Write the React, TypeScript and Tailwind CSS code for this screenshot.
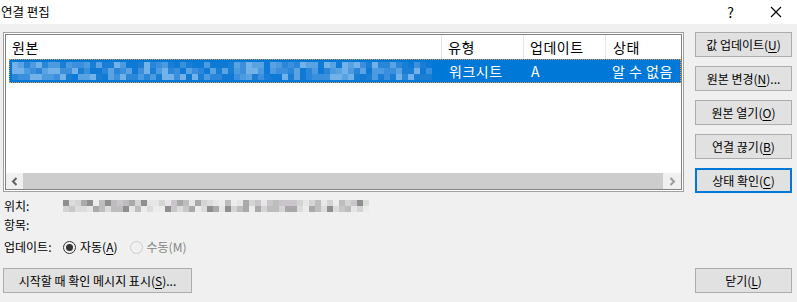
import React from "react";

const FONT = "font-['Noto_Sans_CJK_KR','Noto_Sans',sans-serif]";

function mosaic(seed: number, cols: number, rows: number, palette: string[]) {
  let s = seed;
  const next = () => {
    s = (s * 1103515245 + 12345) % 2147483648;
    return s / 2147483648;
  };
  const grid: string[][] = [];
  for (let r = 0; r < rows; r++) {
    const row: string[] = [];
    for (let c = 0; c < cols; c++) {
      row.push(palette[Math.floor(next() * palette.length)]);
    }
    grid.push(row);
  }
  return grid;
}

const ROW_BLUR = mosaic(7, 70, 3, ["#1a7fd4", "#3b8fdc", "#5aa3e3", "#2a86d8", "#72b2e8", "#0f79d6", "#4c9ae0"]);
const PATH_BLUR = mosaic(31, 51, 2, ["#e6e6e6", "#d4d4d4", "#bdbdbd", "#a9a9a9", "#ececec", "#c9c5ca", "#dcdcdc", "#8f8f8f"]);

function Blur({ grid, cell }: { grid: string[][]; cell: number }) {
  return (
    <div className="flex flex-col">
      {grid.map((row, i) => (
        <div key={i} className="flex">
          {row.map((c, j) => (
            <span key={j} style={{ width: cell, height: cell, background: c }} />
          ))}
        </div>
      ))}
    </div>
  );
}

function Btn({ children, focused, className = "" }: { children: React.ReactNode; focused?: boolean; className?: string }) {
  return (
    <button
      className={`flex h-[25px] w-[97px] items-center justify-center bg-[#e1e1e1] text-[12px] leading-none text-black ${
        focused ? "border-2 border-[#0078d7]" : "border border-[#adadad]"
      } ${className}`}
    >
      {children}
    </button>
  );
}

function U({ children }: { children: React.ReactNode }) {
  return <span className="underline underline-offset-2">{children}</span>;
}

export default function App() {
  return (
    <div className={`flex h-[302px] w-[797px] flex-col bg-[#f0f0f0] text-black ${FONT}`}>
      {/* title bar */}
      <div className="flex h-[24px] items-center bg-white">
        <span className="pl-[1px] text-[12.5px] leading-none">연결 편집</span>
        <span className="ml-auto mr-[36px] text-[14px] leading-none">?</span>
        <svg width="12" height="12" viewBox="0 0 12 12" className="mr-[15px]">
          <path d="M1 1 L11 11 M11 1 L1 11" stroke="#000" strokeWidth="1.1" />
        </svg>
      </div>

      <div className="flex pt-[8px]">
        {/* left column */}
        <div className="ml-[3px] flex w-[681px] flex-col">
          <div className="h-[160px] border border-[#a0a0a0] bg-white p-[1px]">
            <div className="flex h-full flex-col overflow-hidden border border-[#828282] bg-white">
              {/* header */}
              <div className="flex h-[24px] items-center text-[14px] leading-none tracking-[0.5px]">
                <div className="flex h-full w-[436px] items-center border-r border-[#e5e5e5] pl-[6px]">원본</div>
                <div className="flex h-full w-[82px] items-center border-r border-[#e5e5e5] pl-[6px]">유형</div>
                <div className="flex h-full w-[82px] items-center border-r border-[#e5e5e5] pl-[6px]">업데이트</div>
                <div className="flex h-full flex-1 items-center pl-[7px]">상태</div>
              </div>
              {/* selected row */}
              <div className="ml-[3px] flex h-[24px] items-center border border-dotted border-[#e39a4a] bg-[#0078d7] text-[14px] leading-none tracking-[0.5px] text-white">
                <div className="flex w-[432px] items-center overflow-hidden pl-[2px]">
                  <Blur grid={ROW_BLUR} cell={6} />
                </div>
                <div className="w-[82px] pl-[7px]">워크시트</div>
                <div className="w-[82px] pl-[7px]">A</div>
                <div className="flex-1 whitespace-nowrap pl-[6px]">알 수 없음</div>
              </div>
              <div className="flex-1" />
              {/* horizontal scrollbar */}
              <div className="flex h-[16px] items-stretch">
                <div className="flex w-[17px] items-center justify-center bg-[#f0f0f0]">
                  <svg width="8" height="9" viewBox="0 0 8 9">
                    <path d="M5.5 1 L2 4.5 L5.5 8" stroke="#606060" strokeWidth="2" fill="none" />
                  </svg>
                </div>
                <div className="flex-1 bg-[#cdcdcd]" />
                <div className="flex w-[18px] items-center justify-center bg-[#f0f0f0]">
                  <svg width="8" height="9" viewBox="0 0 8 9">
                    <path d="M2.5 1 L6 4.5 L2.5 8" stroke="#9a9a9a" strokeWidth="2" fill="none" />
                  </svg>
                </div>
              </div>
            </div>
          </div>

          {/* info */}
          <div className="mt-[7px] flex h-[14px] items-center text-[12px] leading-none">
            <span className="w-[60px] pl-[1px]">위치:</span>
            <Blur grid={PATH_BLUR} cell={6} />
          </div>
          <div className="mt-[4px] flex h-[16px] items-center pl-[1px] text-[12px] leading-none">항목:</div>
          <div className="mt-[5px] flex h-[18px] items-center text-[12px] leading-none">
            <span className="w-[60px] pl-[1px]">업데이트:</span>
            <span className="flex h-[13px] w-[13px] items-center justify-center rounded-full border border-[#333]">
              <span className="h-[7px] w-[7px] rounded-full bg-[#333]" />
            </span>
            <span className="ml-[4px]">
              자동(<U>A</U>)
            </span>
            <span className="ml-[12px] h-[13px] w-[13px] rounded-full border border-[#cccccc]" />
            <span className="ml-[4px] text-[#858585]">수동(M)</span>
          </div>
        </div>

        {/* right buttons */}
        <div className="ml-[11px] flex flex-col gap-[9px]">
          <Btn>
            값 업데이트(<U>U</U>)
          </Btn>
          <Btn>
            원본 변경(<U>N</U>)...
          </Btn>
          <Btn>
            원본 열기(<U>O</U>)
          </Btn>
          <Btn>
            연결 끊기(<U>B</U>)
          </Btn>
          <Btn focused>
            상태 확인(<U>C</U>)
          </Btn>
        </div>
      </div>

      {/* bottom row */}
      <div className="mt-auto mb-[9px] flex items-center justify-between pl-[3px] pr-[5px]">
        <button className="flex h-[25px] w-[189px] items-center justify-center border border-[#adadad] bg-[#e1e1e1] text-[12px] leading-none">
          시작할 때 확인 메시지 표시(<U>S</U>)...
        </button>
        <Btn>
          닫기(<U>L</U>)
        </Btn>
      </div>
    </div>
  );
}
